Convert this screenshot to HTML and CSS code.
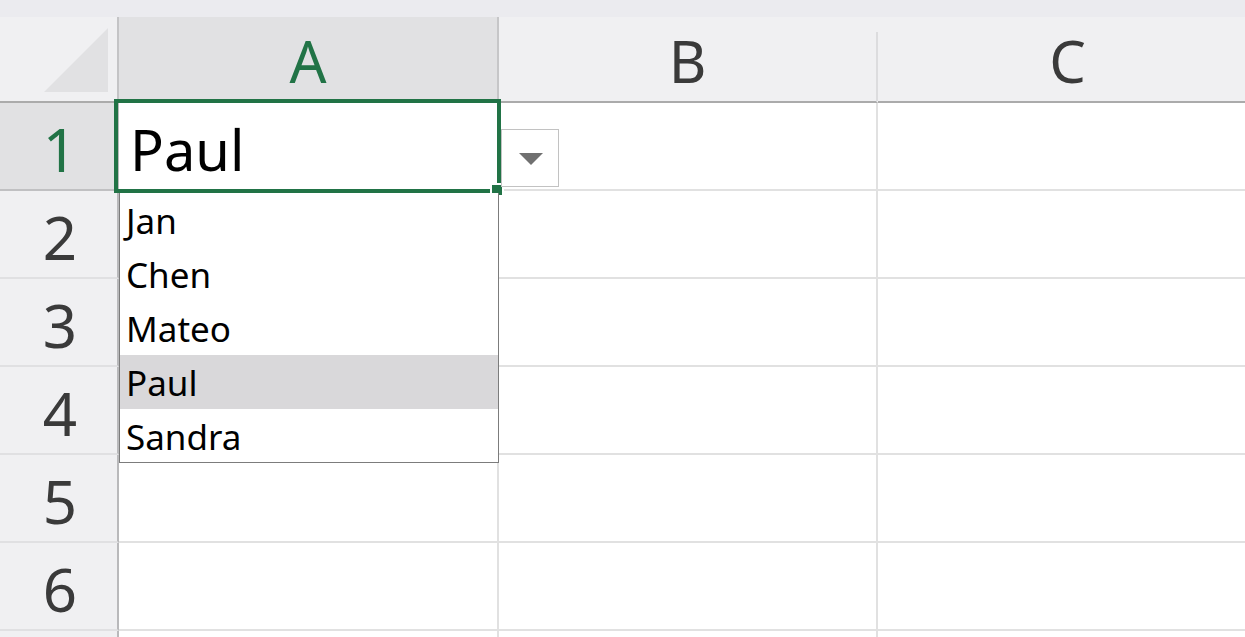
FILE: index.html
```html
<!DOCTYPE html>
<html lang="en">
<head>
<meta charset="utf-8">
<title>Sheet dropdown</title>
<link rel="stylesheet" href="styles.css">
</head>
<body>
<div class="app">
  <div class="topstrip"></div>
  <div class="sheet">
    <div class="corner">
      <svg class="corner-tri" width="64" height="64" viewBox="0 0 64 64"><polygon points="64,0 64,64 0,64" fill="#e1e1e3"/></svg>
    </div>
    <div class="colhead sel">A</div>
    <div class="colhead">B</div>
    <div class="colhead last">C</div>

    <div class="rowhead sel">1</div>
    <div class="cell a1">Paul</div>
    <div class="cell"></div>
    <div class="cell last"></div>

    <div class="rowhead">2</div>
    <div class="cell"></div>
    <div class="cell"></div>
    <div class="cell last"></div>

    <div class="rowhead">3</div>
    <div class="cell"></div>
    <div class="cell"></div>
    <div class="cell last"></div>

    <div class="rowhead">4</div>
    <div class="cell"></div>
    <div class="cell"></div>
    <div class="cell last"></div>

    <div class="rowhead">5</div>
    <div class="cell"></div>
    <div class="cell"></div>
    <div class="cell last"></div>

    <div class="rowhead">6</div>
    <div class="cell"></div>
    <div class="cell"></div>
    <div class="cell last"></div>

    <div class="rowhead"></div>
    <div class="cell"></div>
    <div class="cell"></div>
    <div class="cell last"></div>
  </div>

  <div class="selection"></div>
  <div class="fill-handle"></div>

  <div class="dd-button">
    <svg width="24" height="12" viewBox="0 0 24 12"><polygon points="0,0 24,0 12,12" fill="#707070"/></svg>
  </div>

  <ul class="dd-list">
    <li class="dd-item">Jan</li>
    <li class="dd-item">Chen</li>
    <li class="dd-item">Mateo</li>
    <li class="dd-item active">Paul</li>
    <li class="dd-item">Sandra</li>
  </ul>
</div>
</body>
</html>
```

FILE: styles.css
```css
html, body {
  margin: 0;
  padding: 0;
  background: #ffffff;
  overflow: hidden;
}

body {
  font-family: "Noto Sans", "Open Sans", sans-serif;
  width: 1245px;
  height: 637px;
}

.app {
  position: relative;
  width: 1245px;
  height: 637px;
  overflow: hidden;
}

.topstrip {
  height: 17px;
  background: #ebebef;
}

.sheet {
  display: grid;
  grid-template-columns: 119px 380px 379px 1fr;
  grid-template-rows: 86px repeat(7, 88px);
}

.corner {
  background: #f0f0f2;
  border-right: 2px solid #c4c4c6;
  border-bottom: 2px solid #ababab;
  display: flex;
  justify-content: flex-end;
  align-items: flex-end;
  padding: 0 9px 9px 0;
}

.corner-tri {
  display: block;
}

.colhead {
  position: relative;
  background: #f0f0f2;
  border-right: 2px solid transparent;
  border-bottom: 2px solid #ababab;
  color: #3a3a3a;
  font-size: 58px;
  display: flex;
  justify-content: center;
  align-items: center;
  padding-top: 3px;
}

.colhead::after {
  content: "";
  position: absolute;
  right: -2px;
  top: 15px;
  bottom: 0;
  width: 2px;
  background: #dcdcde;
}

.colhead.sel {
  background: #e1e1e3;
  color: #217346;
  border-right-color: #c6c6c8;
}

.colhead.sel::after,
.colhead.last::after {
  display: none;
}

.colhead.last {
  border-right: none;
  padding-left: 12px;
}

.rowhead {
  background: #f0f0f2;
  border-right: 2px solid #b9b9bb;
  border-bottom: 2px solid #e0e0e2;
  color: #3a3a3a;
  font-size: 60px;
  display: flex;
  justify-content: center;
  align-items: center;
  padding: 6px 0 0 3px;
}

.rowhead.sel {
  background: #e1e1e3;
  color: #217346;
  border-bottom-color: #c0c0c2;
}

.cell {
  background: #ffffff;
  border-right: 2px solid #e1e1e1;
  border-bottom: 2px solid #e1e1e1;
}

.cell.last {
  border-right: none;
}

.a1 {
  font-size: 56px;
  color: #000000;
  display: flex;
  align-items: center;
  padding: 6px 0 0 11px;
}

.selection {
  position: absolute;
  left: 114px;
  top: 99px;
  width: 387px;
  height: 94px;
  box-sizing: border-box;
  border: 4px solid #217346;
  pointer-events: none;
}

.fill-handle {
  position: absolute;
  left: 490px;
  top: 183px;
  width: 10px;
  height: 10px;
  background: #217346;
  border: 2px solid #ffffff;
}

.dd-button {
  position: absolute;
  left: 501px;
  top: 129px;
  width: 58px;
  height: 58px;
  box-sizing: border-box;
  border: 1px solid #c2c2c2;
  background: #ffffff;
  display: flex;
  justify-content: center;
  align-items: center;
  padding-left: 1px;
}

.dd-button svg {
  display: block;
  margin-top: 1px;
}

.dd-list {
  position: absolute;
  left: 119px;
  top: 193px;
  width: 380px;
  height: 270px;
  box-sizing: border-box;
  margin: 0;
  padding: 0;
  list-style: none;
  background: #ffffff;
  border: 1px solid #7c7c7c;
  border-top: none;
}

.dd-item {
  height: 54px;
  line-height: 54px;
  font-size: 35px;
  color: #000000;
  padding-left: 6px;
  padding-top: 1px;
  box-sizing: border-box;
}

.dd-item.active {
  background: #d9d8da;
}
```
